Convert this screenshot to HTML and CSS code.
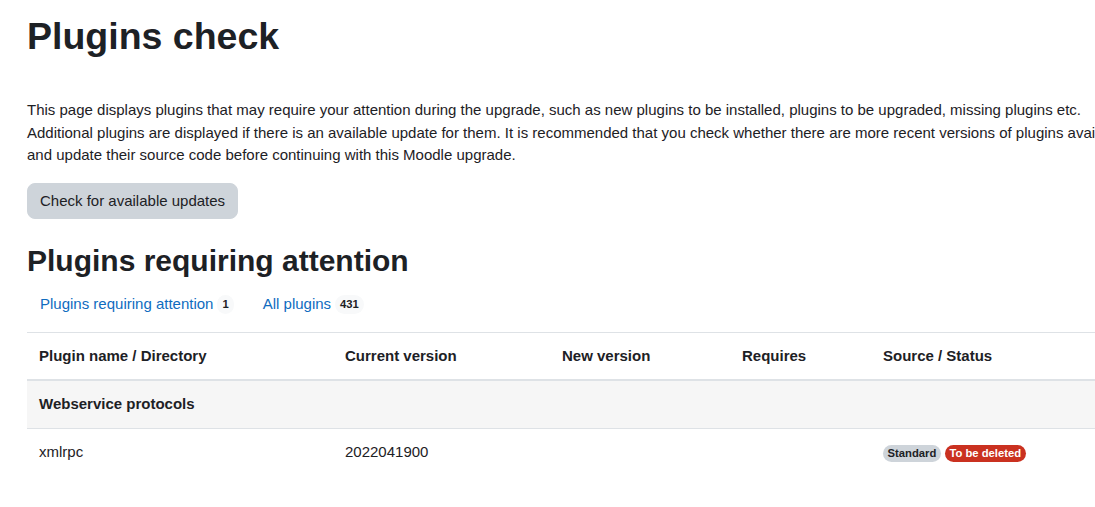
FILE: index.html
```html
<!DOCTYPE html>
<html lang="en">
<head>
<meta charset="utf-8">
<title>Plugins check</title>
<link rel="stylesheet" href="styles.css">
</head>
<body>
<div class="page">
  <h1 class="title">Plugins check</h1>
  <p class="intro">This page displays plugins that may require your attention during the upgrade, such as new plugins to be installed, plugins to be upgraded, missing plugins etc. Additional plugins are displayed if there is an available update for them. It is recommended that you check whether there are more recent versions of plugins available and update their source code before continuing with this Moodle upgrade.</p>
  <button class="btn" type="button">Check for available updates</button>
  <h2 class="subtitle">Plugins requiring attention</h2>
  <nav class="tabs">
    <a class="tab" href="#">Plugins requiring attention <span class="count">1</span></a>
    <a class="tab" href="#">All plugins <span class="count">431</span></a>
  </nav>
  <table class="plugins">
    <colgroup>
      <col class="c1"><col class="c2"><col class="c3"><col class="c4"><col class="c5">
    </colgroup>
    <thead>
      <tr>
        <th>Plugin name / Directory</th>
        <th>Current version</th>
        <th>New version</th>
        <th>Requires</th>
        <th>Source / Status</th>
      </tr>
    </thead>
    <tbody>
      <tr class="group">
        <th colspan="5">Webservice protocols</th>
      </tr>
      <tr>
        <td>xmlrpc</td>
        <td>2022041900</td>
        <td></td>
        <td></td>
        <td><span class="badge badge-std">Standard</span> <span class="badge badge-del">To be deleted</span></td>
      </tr>
    </tbody>
  </table>
</div>
</body>
</html>
```
FILE: styles.css
```css
html, body {
  margin: 0;
  padding: 0;
  background: #fff;
  overflow: hidden;
}
body {
  font-family: "Liberation Sans", Arial, sans-serif;
  font-size: 15px;
  line-height: 1.5;
  color: #1d2125;
}
.page {
  width: 1118px;
  padding: 14px 0 0 27px;
}
.title {
  font-size: 37.5px;
  line-height: 1.2;
  font-weight: 700;
  margin: 0 0 40px 0;
}
.intro {
  margin: 0 0 16px 0;
}
.btn {
  display: inline-block;
  font-family: inherit;
  font-size: 15px;
  line-height: 1.5;
  color: #1d2125;
  background: #ced4da;
  border: 1px solid #ced4da;
  border-radius: 8px;
  padding: 6px 12px;
  margin: 0;
  cursor: pointer;
}
.subtitle {
  font-size: 30px;
  line-height: 1.2;
  font-weight: 700;
  margin: 24px 0 6px 0;
}
.tabs {
  display: flex;
  margin-bottom: 8px;
}
.tab {
  color: #0f6cbf;
  text-decoration: none;
  padding: 8px 13px;
  display: flex;
  align-items: center;
  gap: 4px;
}
.tab + .tab {
  margin-left: 3px;
}
.count {
  display: inline-block;
  background: #f8f9fa;
  color: #1d2125;
  font-size: 11.25px;
  font-weight: 700;
  line-height: 1;
  padding: 4px 5px;
  border-radius: 10px;
}
.plugins {
  width: 100%;
  border-collapse: collapse;
  table-layout: fixed;
}
.c1 { width: 306px; }
.c2 { width: 217px; }
.c3 { width: 180px; }
.c4 { width: 141px; }
.plugins th, .plugins td {
  padding: 12px;
  text-align: left;
  vertical-align: top;
  border-top: 1px solid #dee2e6;
}
.plugins thead th {
  font-weight: 700;
  border-bottom: 2px solid #dee2e6;
}
.plugins .group th {
  background: #f6f6f6;
  font-weight: 700;
  border-top: 0;
}
.badge {
  display: inline-block;
  font-size: 11.25px;
  font-weight: 700;
  line-height: 1;
  padding: 3px 4.5px;
  border-radius: 10px;
  vertical-align: baseline;
}
.badge-std {
  background: #ced4da;
  color: #1d2125;
}
.badge-del {
  background: #ca3120;
  color: #fff;
}
```
